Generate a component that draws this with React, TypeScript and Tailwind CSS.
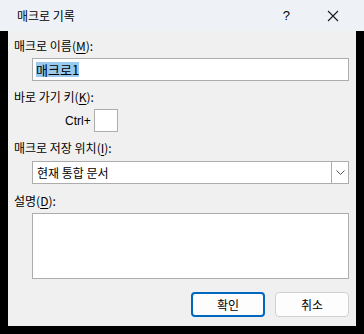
const FONT = "font-['Malgun_Gothic','Noto_Sans_CJK_KR','Noto_Sans',sans-serif]";

function Label({ text, hot, after }: { text: string; hot: string; after?: string }) {
  return (
    <div className="h-4 text-[12px] leading-4 text-black">
      {text}(<span className="underline underline-offset-2">{hot}</span>){after ?? ":"}
    </div>
  );
}

export default function App() {
  return (
    <div className={`w-[364px] h-[334px] bg-black ${FONT} select-none`}>
      {/* title bar */}
      <div className="h-[31px] bg-[#eef2f7] flex items-center">
        <span className="ml-[17px] text-[12px] text-black">매크로 기록</span>
        <span className="ml-auto mr-[37px] text-[13px] text-black font-['Liberation_Sans',sans-serif]">?</span>
        <svg className="mr-[25px]" width="12" height="12" viewBox="0 0 12 12">
          <path d="M1 1 L11 11 M11 1 L1 11" stroke="#1a1a1a" strokeWidth="1.1" />
        </svg>
      </div>

      {/* body */}
      <div className="mx-[8px] h-[295px] bg-[#f0f0f0] pl-[6px] pr-[7px] pt-[7px]">
        <Label text="매크로 이름" hot="M" />
        <div className="mt-[4px] ml-[18px] h-[23px] border border-[#adadad] bg-white flex items-center pl-[3px]">
          <span className="bg-[#99c9ef] text-[13px] leading-[15px] text-black">매크로1</span>
        </div>

        <div className="mt-[8px]">
          <Label text="바로 가기 키" hot="K" />
        </div>
        <div className="mt-[4px] flex items-center">
          <span className="ml-[51px] text-[12px] text-black font-['Liberation_Sans','Noto_Sans_CJK_KR',sans-serif]">Ctrl+</span>
          <div className="ml-[3px] w-[24px] h-[23px] border border-[#adadad] bg-white" />
        </div>

        <div className="mt-[8px]">
          <Label text="매크로 저장 위치" hot="I" />
        </div>
        <div className="mt-[5px] ml-[18px] h-[23px] border border-[#adadad] bg-white flex items-center">
          <span className="ml-[4px] text-[12px] text-black">현재 통합 문서</span>
          <div className="ml-auto w-[17px] h-full border-l border-[#adadad] flex items-center justify-center">
            <svg width="9" height="5" viewBox="0 0 9 5">
              <path d="M0.5 0.5 L4.5 4.5 L8.5 0.5" stroke="#555" strokeWidth="1" fill="none" />
            </svg>
          </div>
        </div>

        <div className="mt-[9px]">
          <Label text="설명" hot="D" />
        </div>
        <div className="mt-[4px] ml-[18px] h-[66px] border border-[#adadad] bg-white" />

        <div className="mt-[13px] flex justify-end gap-[10px]">
          <button className="w-[74px] h-[25px] rounded-[4px] border-2 border-[#0067c0] bg-[#fdfdfd] text-[12px] text-black flex items-center justify-center">
            확인
          </button>
          <button className="w-[74px] h-[25px] rounded-[4px] border border-[#d0d0d0] bg-[#fdfdfd] text-[12px] text-black flex items-center justify-center">
            취소
          </button>
        </div>
      </div>
    </div>
  );
}
